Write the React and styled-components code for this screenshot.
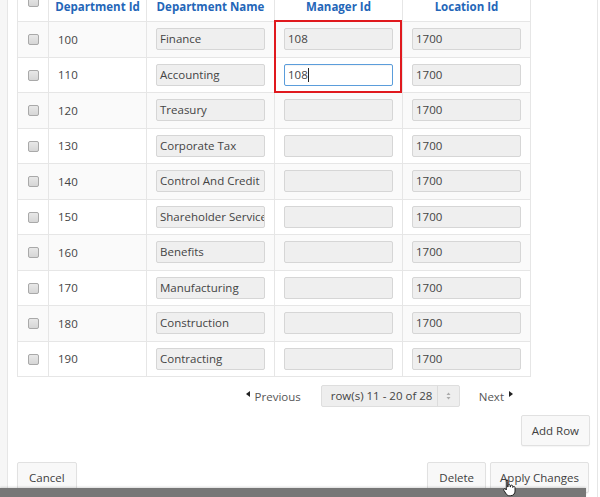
import React from "react";
import styled, { createGlobalStyle } from "styled-components";

const GlobalStyle = createGlobalStyle`
  html, body {
    margin: 0;
    padding: 0;
    background: #fff;
    overflow: hidden;
  }
  body {
    font-family: "Open Sans", "Segoe UI", "Liberation Sans", sans-serif;
    font-size: 11.5px;
    color: #333;
  }
`;

const rows = [
  { id: 100, name: "Finance", manager: "108", location: "1700" },
  { id: 110, name: "Accounting", manager: "108", location: "1700", editing: true },
  { id: 120, name: "Treasury", manager: "", location: "1700" },
  { id: 130, name: "Corporate Tax", manager: "", location: "1700" },
  { id: 140, name: "Control And Credit", manager: "", location: "1700" },
  { id: 150, name: "Shareholder Services", manager: "", location: "1700" },
  { id: 160, name: "Benefits", manager: "", location: "1700" },
  { id: 170, name: "Manufacturing", manager: "", location: "1700" },
  { id: 180, name: "Construction", manager: "", location: "1700" },
  { id: 190, name: "Contracting", manager: "", location: "1700" },
];

const Page = styled.div`
  display: flex;
  width: 600px;
  height: 497px;
  position: relative;
  overflow: hidden;
`;

const Gutter = styled.div`
  width: 7px;
  background: #f6f6f6;
  border-right: 1px solid #e6e6e6;
  flex-shrink: 0;
`;

const Main = styled.div`
  width: 590px;
  border-right: 1px solid #e6e6e6;
  padding: 0 7px 0 9px;
  box-sizing: border-box;
  display: flex;
  flex-direction: column;
`;

const GridWrap = styled.div`
  position: relative;
  width: 514px;
`;

const Grid = styled.table`
  border-collapse: collapse;
  table-layout: fixed;
  width: 514px;
  border-left: 1px solid #e6e6e6;
  border-right: 1px solid #e6e6e6;
  border-bottom: 1px solid #e6e6e6;
`;

const Th = styled.th`
  height: 21px;
  padding: 0 0 7px;
  box-sizing: border-box;
  font-weight: 700;
  font-size: 11.5px;
  line-height: 14px;
  color: #2466b8;
  text-align: center;
  vertical-align: bottom;
  border-left: 1px solid #e6e6e6;
  border-bottom: 1px solid #e6e6e6;
`;

const Tr = styled.tr`
  background: ${(p) => (p.$striped ? "#fafafa" : "#fff")};
`;

const Td = styled.td`
  height: 34.5px;
  padding: 0 ${(p) => (p.$center ? "0" : "9px")};
  text-align: ${(p) => (p.$center ? "center" : "left")};
  border-left: 1px solid #e6e6e6;
  border-bottom: 1px solid #e6e6e6;
  vertical-align: middle;
  color: #444;
`;

const Check = styled.span`
  display: inline-block;
  width: 9px;
  height: 9px;
  border: 1px solid #a9a9a9;
  border-radius: 2px;
  background: linear-gradient(#e8e8e8, #d6d6d6);
  vertical-align: middle;
  margin-top: ${(p) => (p.$head ? "-12px" : "-2px")};
`;

const Field = styled.div`
  position: relative;
  height: 22px;
  box-sizing: border-box;
  padding: 0 3px;
  line-height: 20px;
  font-size: 11.5px;
  color: #444;
  white-space: nowrap;
  overflow: hidden;
  border-radius: 2px;
  border: 1px solid ${(p) => (p.$active ? "#5b9ddb" : "#d6d6d6")};
  background: ${(p) => (p.$active ? "#fff" : "#efefef")};
  box-shadow: ${(p) => (p.$active ? "inset 0 1px 1px rgba(0,0,0,.05)" : "none")};
`;

const Caret = styled.span`
  display: inline-block;
  width: 1px;
  height: 14px;
  background: #222;
  vertical-align: -3px;
`;

const Highlight = styled.div`
  position: absolute;
  left: 257px;
  top: 20px;
  width: 128px;
  height: 73px;
  box-sizing: border-box;
  border: 2px solid #e0191e;
  pointer-events: none;
`;

const Pager = styled.div`
  width: 514px;
  display: flex;
  justify-content: flex-end;
  align-items: center;
  padding: 8px 18px 0 0;
  box-sizing: border-box;
  color: #555;
`;

const PageLink = styled.span`
  display: flex;
  align-items: center;
  gap: 5px;
  font-size: 11.5px;
  color: #555;
`;

const Tri = styled.span`
  width: 0;
  height: 0;
  border-top: 3px solid transparent;
  border-bottom: 3px solid transparent;
  ${(p) =>
    p.$dir === "left"
      ? "border-right: 4px solid #222;"
      : "border-left: 4px solid #222;"}
  margin-top: -5px;
`;

const Select = styled.div`
  display: flex;
  width: 139px;
  height: 22px;
  box-sizing: border-box;
  margin: 0 19px 0 20px;
  border: 1px solid #dedede;
  border-radius: 2px;
  background: #eeeeee;
  font-size: 11.5px;
  color: #444;
`;

const SelectText = styled.span`
  flex: 1;
  padding-left: 9px;
  line-height: 20px;
`;

const SelectArrow = styled.span`
  width: 21px;
  border-left: 1px solid #dcdcdc;
  display: flex;
  align-items: center;
  justify-content: center;
`;

const Actions = styled.div`
  display: flex;
  justify-content: ${(p) => (p.$split ? "space-between" : "flex-end")};
  margin-top: ${(p) => p.$top}px;
  padding-right: ${(p) => p.$right || 0}px;
`;

const Group = styled.div`
  display: flex;
  gap: 4px;
`;

const Button = styled.button`
  height: 31px;
  padding: 0 ${(p) => p.$pad || 11}px;
  font-family: "Open Sans", "Segoe UI", "Liberation Sans", sans-serif;
  font-size: 11.5px;
  color: #404040;
  background: #f8f8f8;
  border: 1px solid #e1e1e1;
  border-radius: 2px;
  box-shadow: 0 1px 1px rgba(0, 0, 0, 0.04);
`;

const BottomBar = styled.div`
  position: absolute;
  left: 0;
  bottom: 0;
  width: 586px;
  height: 9px;
  background: #777;
  box-shadow: 0 -1px 2px rgba(0, 0, 0, 0.15);
`;

const Pointer = styled.svg`
  position: absolute;
  left: 503px;
  top: 479px;
`;

const App = () => (
  <Page>
    <GlobalStyle />
    <Gutter />
    <Main>
      <GridWrap>
        <Grid>
          <colgroup>
            <col style={{ width: 31 }} />
            <col style={{ width: 98 }} />
            <col style={{ width: 128 }} />
            <col style={{ width: 128 }} />
            <col style={{ width: 128 }} />
          </colgroup>
          <thead>
            <tr>
              <Th>
                <Check $head />
              </Th>
              <Th>Department Id</Th>
              <Th>Department Name</Th>
              <Th>Manager Id</Th>
              <Th>Location Id</Th>
            </tr>
          </thead>
          <tbody>
            {rows.map((r, i) => (
              <Tr key={r.id} $striped={i % 2 === 0}>
                <Td $center>
                  <Check />
                </Td>
                <Td>{r.id}</Td>
                <Td>
                  <Field>{r.name}</Field>
                </Td>
                <Td>
                  <Field $active={r.editing}>
                    {r.manager}
                    {r.editing && <Caret />}
                  </Field>
                </Td>
                <Td>
                  <Field>{r.location}</Field>
                </Td>
              </Tr>
            ))}
          </tbody>
        </Grid>
        <Highlight />
      </GridWrap>

      <Pager>
        <PageLink>
          <Tri $dir="left" />
          Previous
        </PageLink>
        <Select>
          <SelectText>row(s) 11 - 20 of 28</SelectText>
          <SelectArrow>
            <svg width="5" height="8" viewBox="0 0 5 8">
              <path d="M2.5 0.5 L4.5 3 H0.5 Z M2.5 7.5 L4.5 5 H0.5 Z" fill="#aaa" />
            </svg>
          </SelectArrow>
        </Select>
        <PageLink>
          Next
          <Tri $dir="right" />
        </PageLink>
      </Pager>

      <Actions $top={8}>
        <Button $pad={10}>Add Row</Button>
      </Actions>

      <Actions $split $top={16} $right={1}>
        <Button $pad={11}>Cancel</Button>
        <Group>
          <Button $pad={11}>Delete</Button>
          <Button $pad={9}>Apply Changes</Button>
        </Group>
      </Actions>
    </Main>
    <BottomBar />
    <Pointer width="13" height="18" viewBox="0 0 13 18">
      <path
        d="M3.5 1.2c.7 0 1.2.5 1.2 1.2V8h.3V6.6c0-.6.5-1.1 1.1-1.1s1.1.5 1.1 1.1V8h.3V7.2c0-.6.5-1.1 1.1-1.1s1.1.5 1.1 1.1V8.4h.2c0-.6.5-1 1-1s1.1.5 1.1 1.1v3.6c0 2.4-1.6 4.6-4.4 4.6H6.3c-1.3 0-2.2-.6-2.9-1.5L.9 11.4c-.4-.5-.3-1.2.2-1.5.5-.4 1.1-.2 1.5.2l.7.9V2.4c0-.7.5-1.2 1.2-1.2z"
        fill="#fff"
        stroke="#111"
        strokeWidth="0.9"
      />
    </Pointer>
  </Page>
);

export default App;
